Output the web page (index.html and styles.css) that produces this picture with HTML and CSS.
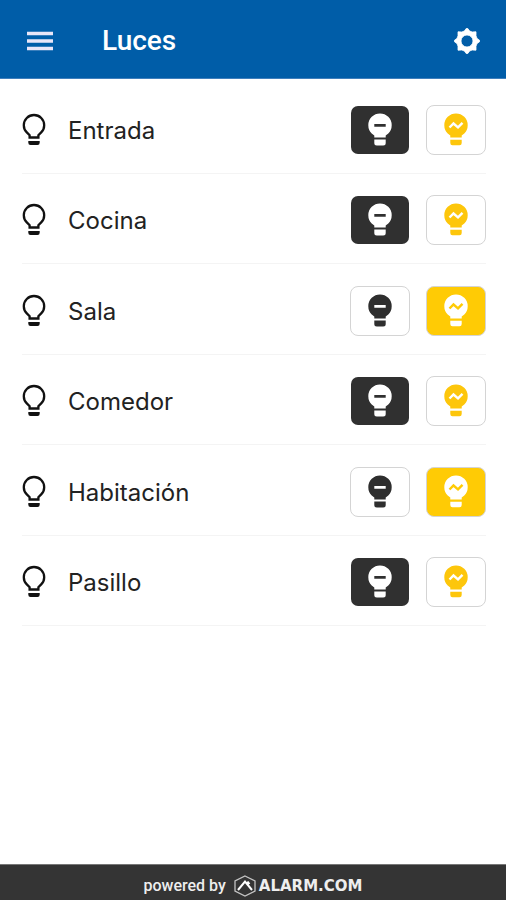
FILE: index.html
```html
<!DOCTYPE html>
<html lang="es">
<head>
<meta charset="utf-8">
<meta name="viewport" content="width=device-width, initial-scale=1">
<title>Luces</title>
<link rel="stylesheet" href="styles.css">
</head>
<body>
<svg class="defs" aria-hidden="true">
  <symbol id="bulb" viewBox="0 0 24 34">
    <path d="M7.600 24.500V22.200L4.800 19.400A10.200 10.200 0 1 1 19.200 19.400L16.400 22.200V24.500z" fill="none" stroke="currentColor" stroke-width="2.300"/>
    <path d="M6.300 28h11.400v1.800q0 2.200-2.200 2.200h-7q-2.200 0-2.200-2.200z" fill="currentColor"/>
  </symbol>
  <symbol id="bulb-off" viewBox="0 0 24 34">
    <path fill="currentColor" fill-rule="evenodd" d="M6.300 24.500V22.500L3.700 20.400A11.700 11.700 0 1 1 20.300 20.400L17.700 22.500V24.500zM6.300 11v2.800h11.400v-2.800z"/>
    <path fill="currentColor" d="M6.300 26.500h11.400v3.500q0 2.500-2.500 2.500h-6.400q-2.500 0-2.500-2.500z"/>
  </symbol>
  <symbol id="bulb-on" viewBox="0 0 24 34">
    <path fill="currentColor" d="M6.300 24.500V22.500L3.700 20.400A11.700 11.700 0 1 1 20.300 20.400L17.700 22.500V24.500z"/>
    <path class="wave" d="M5.500 14.500l4-4 4.500 3.800 4.500-4.500" fill="none" stroke-width="2.400"/>
    <path fill="currentColor" d="M6.300 26.800h11.400v3.200q0 2.200-2.200 2.200h-7q-2.200 0-2.200-2.200z"/>
  </symbol>
</svg>

<header class="bar">
  <button class="icon-button" type="button" aria-label="Menú">
    <svg class="menu-icon" viewBox="0 0 26 20"><path d="M0 2.500h26M0 10h26M0 17.500h26" stroke="currentColor" stroke-width="3.400"/></svg>
  </button>
  <h1 class="title">Luces</h1>
  <button class="icon-button" type="button" aria-label="Ajustes">
    <svg class="gear-icon" viewBox="-13 -13 26 26">
      <path fill="currentColor" fill-rule="evenodd" stroke="currentColor" stroke-width=".8" stroke-linejoin="round" d="M-2.600-10L-.8-12.500H.8L2.600-10 5.200-9 9-9.200 9-5.200 10-2.600 12.500-.8V.8L10 2.600 9 5.200 9 9.200 5.200 9 2.600 10 .8 12.500H-.8L-2.600 10-5.200 9-9 9.200-9 5.200-10 2.600-12.500 .8V-.8L-10-2.600-9-5.200-9-9.200-5.200-9zM0-6a6 6 0 1 0 0 12 6 6 0 1 0 0-12z"/>
    </svg>
  </button>
</header>

<main class="content">
  <ul class="lights">
    <li class="light">
      <svg class="bulb"><use href="#bulb"/></svg>
      <span class="name">Entrada</span>
      <button class="switch off active" type="button" aria-label="Apagar Entrada" aria-pressed="true"><svg class="glyph"><use href="#bulb-off"/></svg></button>
      <button class="switch on" type="button" aria-label="Encender Entrada" aria-pressed="false"><svg class="glyph"><use href="#bulb-on"/></svg></button>
    </li>
    <li class="light">
      <svg class="bulb"><use href="#bulb"/></svg>
      <span class="name">Cocina</span>
      <button class="switch off active" type="button" aria-label="Apagar Cocina" aria-pressed="true"><svg class="glyph"><use href="#bulb-off"/></svg></button>
      <button class="switch on" type="button" aria-label="Encender Cocina" aria-pressed="false"><svg class="glyph"><use href="#bulb-on"/></svg></button>
    </li>
    <li class="light">
      <svg class="bulb"><use href="#bulb"/></svg>
      <span class="name">Sala</span>
      <button class="switch off" type="button" aria-label="Apagar Sala" aria-pressed="false"><svg class="glyph"><use href="#bulb-off"/></svg></button>
      <button class="switch on active" type="button" aria-label="Encender Sala" aria-pressed="true"><svg class="glyph"><use href="#bulb-on"/></svg></button>
    </li>
    <li class="light">
      <svg class="bulb"><use href="#bulb"/></svg>
      <span class="name">Comedor</span>
      <button class="switch off active" type="button" aria-label="Apagar Comedor" aria-pressed="true"><svg class="glyph"><use href="#bulb-off"/></svg></button>
      <button class="switch on" type="button" aria-label="Encender Comedor" aria-pressed="false"><svg class="glyph"><use href="#bulb-on"/></svg></button>
    </li>
    <li class="light">
      <svg class="bulb"><use href="#bulb"/></svg>
      <span class="name">Habitación</span>
      <button class="switch off" type="button" aria-label="Apagar Habitación" aria-pressed="false"><svg class="glyph"><use href="#bulb-off"/></svg></button>
      <button class="switch on active" type="button" aria-label="Encender Habitación" aria-pressed="true"><svg class="glyph"><use href="#bulb-on"/></svg></button>
    </li>
    <li class="light">
      <svg class="bulb"><use href="#bulb"/></svg>
      <span class="name">Pasillo</span>
      <button class="switch off active" type="button" aria-label="Apagar Pasillo" aria-pressed="true"><svg class="glyph"><use href="#bulb-off"/></svg></button>
      <button class="switch on" type="button" aria-label="Encender Pasillo" aria-pressed="false"><svg class="glyph"><use href="#bulb-on"/></svg></button>
    </li>
  </ul>
</main>

<footer class="footer">
  <span class="powered">powered by</span>
  <svg class="brand-mark" viewBox="0 0 24 22">
    <path d="M12 1l10 5v10l-10 5L2 16V6z" fill="none" stroke="#c4c4c4" stroke-width="1.300"/>
    <path d="M5 15l7-8.500 7 8.500M14.500 6.500l2 2.500" fill="none" stroke="#fff" stroke-width="2"/>
  </svg>
  <span class="brand">ALARM.COM</span>
</footer>
</body>
</html>
```

FILE: styles.css
```css
* {
  box-sizing: border-box;
}

body {
  margin: 0;
  min-height: 100vh;
  display: flex;
  flex-direction: column;
  background: #fff;
  color: #222;
  font-family: Inter, "Liberation Sans", sans-serif;
}

.defs {
  position: absolute;
  width: 0;
  height: 0;
}

button {
  padding: 0;
  border: 0;
  background: none;
  color: inherit;
  cursor: pointer;
}

svg {
  display: block;
}

.bar {
  display: flex;
  align-items: center;
  height: 79px;
  padding: 3px 20px 0 21px;
  background: #005da8;
  border-bottom: 1px solid #3f7fbd;
  color: #fff;
}

.icon-button {
  display: grid;
  place-items: center;
  width: 38px;
  height: 48px;
}

.menu-icon {
  width: 26px;
  height: 20px;
  color: #e9e6f8;
}

.gear-icon {
  width: 26px;
  height: 26px;
}

.title {
  flex: 1;
  margin: 0;
  padding-left: 43px;
  font: 500 28px/36px Roboto, sans-serif;
}

.content {
  flex: 1;
}

.lights {
  display: grid;
  grid-auto-rows: 1fr;
  height: 543px;
  margin: 4px 20px 0 22px;
  padding: 0;
  list-style: none;
}

.light {
  display: flex;
  align-items: center;
  padding-top: 4px;
  border-bottom: 1px solid #f4f4f4;
}

.bulb {
  width: 24px;
  height: 34px;
  color: #111;
}

.name {
  flex: 1;
  padding: 2px 0 0 22px;
  font-size: 24px;
  line-height: 32px;
}

.switch {
  display: grid;
  place-items: center;
  width: 60px;
  height: 50px;
  border: 1px solid #d4d4d4;
  border-radius: 8px;
}

.switch + .switch {
  margin-left: 16px;
}

.glyph {
  width: 24px;
  height: 34px;
}

.wave {
  stroke: var(--face);
}

.off {
  color: #2e2e2e;
}

.on {
  --face: #fff;
  color: #fdc60b;
}

.off.active {
  background: #303030;
  background-clip: padding-box;
  border-color: transparent;
  color: #fff;
}

.on.active {
  --face: #ffcb05;
  background: var(--face);
  color: #fff;
}

.footer {
  display: flex;
  align-items: center;
  justify-content: center;
  height: 36px;
  padding-top: 6px;
  background: #343434;
  border-top: 1px solid #777;
  color: #eee;
}

.powered {
  font: 500 16px/20px Roboto, sans-serif;
}

.brand-mark {
  width: 24px;
  height: 22px;
  margin: 0 2px 0 7px;
}

.brand {
  font: 700 15px/20px "DejaVu Sans", sans-serif;
}
```
